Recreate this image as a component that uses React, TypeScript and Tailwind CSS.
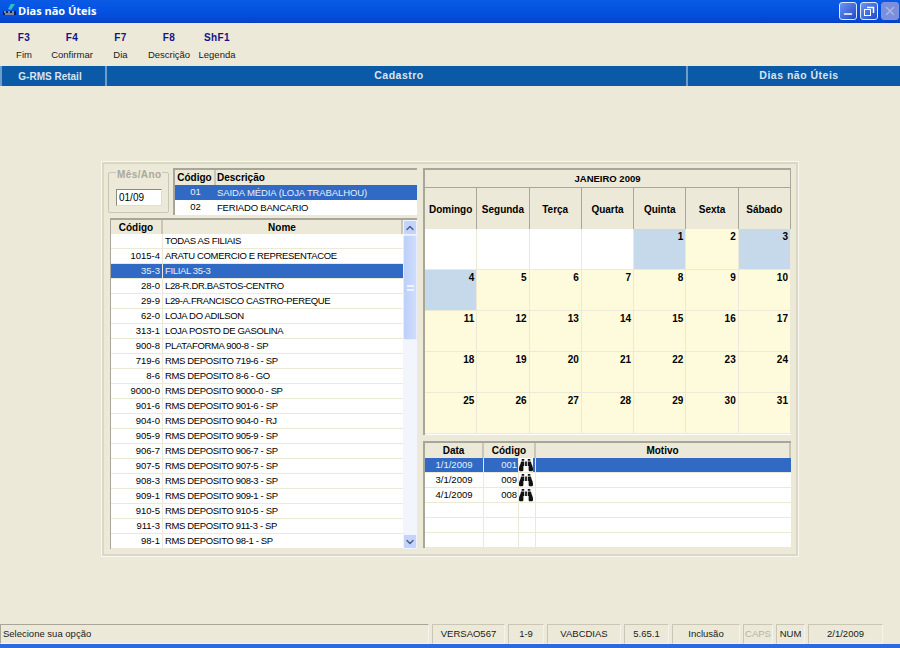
import { FaBinoculars } from "react-icons/fa"
import { Minus, ChevronUp, ChevronDown, X } from "lucide-react"

const shortcuts = [
  { key: "F3", label: "Fim", w: "w-[48px]" },
  { key: "F4", label: "Confirmar", w: "w-[48px]" },
  { key: "F7", label: "Dia", w: "w-[49px]" },
  { key: "F8", label: "Descrição", w: "w-[48px]" },
  { key: "ShF1", label: "Legenda", w: "w-[48px]" },
]

const filiais = [
  ["", "TODAS AS FILIAIS"],
  ["1015-4", "ARATU COMERCIO E REPRESENTACOE"],
  ["35-3", "FILIAL 35-3"],
  ["28-0", "L28-R.DR.BASTOS-CENTRO"],
  ["29-9", "L29-A.FRANCISCO CASTRO-PEREQUE"],
  ["62-0", "LOJA DO ADILSON"],
  ["313-1", "LOJA POSTO DE GASOLINA"],
  ["900-8", "PLATAFORMA 900-8 - SP"],
  ["719-6", "RMS DEPOSITO 719-6 - SP"],
  ["8-6", "RMS DEPOSITO 8-6 - GO"],
  ["9000-0", "RMS DEPOSITO 9000-0 - SP"],
  ["901-6", "RMS DEPOSITO 901-6 - SP"],
  ["904-0", "RMS DEPOSITO 904-0 - RJ"],
  ["905-9", "RMS DEPOSITO 905-9 - SP"],
  ["906-7", "RMS DEPOSITO 906-7 - SP"],
  ["907-5", "RMS DEPOSITO 907-5 - SP"],
  ["908-3", "RMS DEPOSITO 908-3 - SP"],
  ["909-1", "RMS DEPOSITO 909-1 - SP"],
  ["910-5", "RMS DEPOSITO 910-5 - SP"],
  ["911-3", "RMS DEPOSITO 911-3 - SP"],
  ["98-1", "RMS DEPOSITO 98-1 - SP"],
]

const weekdays = ["Domingo", "Segunda", "Terça", "Quarta", "Quinta", "Sexta", "Sábado"]

// null = empty cell; blue days are the ones flagged in the table below
const days: (number | null)[] = [null, null, null, null, ...Array.from({ length: 31 }, (_, i) => i + 1)]
const blueDays = [1, 3, 4]

const motivos = [
  ["1/1/2009", "001"],
  ["3/1/2009", "009"],
  ["4/1/2009", "008"],
  ["", ""],
  ["", ""],
  ["", ""],
]

const statusCells = [
  { text: "VERSAO567", w: "w-[73px]" },
  { text: "1-9", w: "w-[36px]" },
  { text: "VABCDIAS", w: "w-[74px]" },
  { text: "5.65.1", w: "w-[45px]" },
  { text: "Inclusão", w: "w-[68px]" },
  { text: "CAPS", w: "w-[30px]", muted: true },
  { text: "NUM", w: "w-[29px]" },
  { text: "2/1/2009", w: "w-[75px]" },
]

const headCell = "flex items-center justify-center bg-[#ece9d8] border-r-2 border-r-[#c9c6b5] text-[10px] font-bold text-black"

function WinButton({ children, disabled }: { children: React.ReactNode; disabled?: boolean }) {
  return (
    <div
      className={
        disabled
          ? "flex h-[18px] w-[18px] items-center justify-center rounded-[3px] border border-[#7f93e0] bg-[#7c8fdc] text-[#a9b5e6]"
          : "flex h-[18px] w-[18px] items-center justify-center rounded-[3px] border border-[#dfe8ff] bg-gradient-to-br from-[#6f94f0] to-[#2146c8] text-white"
      }
    >
      {children}
    </div>
  )
}

export default function App() {
  return (
    <div className="flex h-[648px] w-[900px] flex-col overflow-hidden bg-[#ece9d8] font-['Liberation_Sans',sans-serif] text-[9.5px] text-black">
      {/* Title bar */}
      <div className="flex h-[23px] shrink-0 items-center justify-between border-b border-b-[#0a3fc0] bg-gradient-to-b from-[#0a5ae6] via-[#0453e0] to-[#0246d2] pl-[2px] pr-[1px]">
        <div className="flex items-center gap-0">
          <svg width="16" height="16" viewBox="0 0 16 16">
            <path d="M9 1 L13 1 L9 7 L6 6 Z" fill="#27c4c8" />
            <rect x="1" y="8" width="13" height="4" fill="#10204a" />
            <path d="M2 9 H4 M6 9 H8 M10 9 H12 M3 11 H12" stroke="#e8f0ff" strokeWidth="1" />
          </svg>
          <span className="font-['Open_Sans',sans-serif] text-[11px] font-bold text-white">Dias não Úteis</span>
        </div>
        <div className="flex items-center gap-[3px]">
          <WinButton>
            <Minus size={12} strokeWidth={3} className="mt-[5px]" />
          </WinButton>
          <WinButton>
            <svg width="12" height="12" viewBox="0 0 12 12" fill="none" stroke="white">
              <rect x="1.5" y="4.5" width="6" height="6" />
              <path d="M4 2.5 H10.5 V8" strokeWidth="1.5" />
            </svg>
          </WinButton>
          <WinButton disabled>
            <X size={14} strokeWidth={2.5} />
          </WinButton>
        </div>
      </div>

      {/* Shortcut bar */}
      <div className="flex h-[43px] shrink-0 items-start pl-0 pt-[9px]">
        {shortcuts.map((s) => (
          <div key={s.key} className={`flex flex-col items-center ${s.w}`}>
            <span className="text-[10px] font-bold leading-[12px] tracking-[0.4px] text-[#14148a]">{s.key}</span>
            <span className="mt-[5px] whitespace-nowrap leading-[12px] text-[#202020]">{s.label}</span>
          </div>
        ))}
      </div>

      {/* Module band */}
      <div className="flex h-[20px] shrink-0 items-center bg-[#0a5aa8] text-[10.5px] font-bold tracking-[0.5px] text-[#dbe4ee]">
        <div className="flex h-full w-[107px] items-center justify-center border-x-2 border-x-[#6f9cc8] pr-[7px] text-[10px] tracking-normal">
          G-RMS Retail
        </div>
        <div className="flex h-full w-[581px] items-center justify-center border-r-2 border-r-[#6f9cc8] pl-[5px]">Cadastro</div>
        <div className="flex h-full flex-1 items-center justify-center pl-[10px]">Dias não Úteis</div>
      </div>

      {/* Work area */}
      <div className="flex flex-1 items-start pl-[102px] pt-[76px]">
        <div className="h-[394px] w-[696px] border-2 border-[#dad7c5] bg-[#ece9d8] px-[3px] pt-[4px] outline outline-1 outline-[#f8f7f0]">
          <div className="flex gap-[6px] pl-[1px]">
            {/* Left column */}
            <div className="flex w-[309px] flex-col">
              <div className="flex h-[48px] gap-[4px]">
                <fieldset className="relative mt-[4px] h-[41px] w-[61px] rounded-[2px] border border-[#c9c6b5] pl-[7px] pt-[16px]">
                  <legend className="absolute -top-[6px] left-[7px] bg-[#ece9d8] px-[1px] text-[10px] font-bold tracking-[0.4px] text-[#aaa89c]">
                    Mês/Ano
                  </legend>
                  <div className="flex h-[17px] w-[46px] items-center border border-[#8d8b7f] border-b-[#e0decf] border-r-[#e0decf] bg-white pl-[2px] text-[10px]">
                    01/09
                  </div>
                </fieldset>
                <div className="h-[47px] flex-1 border-l-2 border-t-2 border-[#a8a698] bg-white">
                  <div className="flex h-[15px] bg-[#ece9d8] font-bold">
                    <div className={`${headCell} w-[41px]`}>Código</div>
                    <div className="flex flex-1 items-center bg-[#ece9d8] pl-[1px] text-[10px] font-bold">Descrição</div>
                  </div>
                  <div className="flex h-[15px] bg-[#316ac5] text-[#e8eef8]">
                    <div className="flex w-[41px] items-center justify-center">01</div>
                    <div className="flex-1 whitespace-nowrap pl-[1px] leading-[15px] tracking-[-0.1px]">SAIDA MÉDIA (LOJA TRABALHOU)</div>
                  </div>
                  <div className="flex h-[15px]">
                    <div className="flex w-[41px] items-center justify-center">02</div>
                    <div className="flex-1 whitespace-nowrap pl-[1px] leading-[15px] tracking-[-0.2px]">FERIADO BANCARIO</div>
                  </div>
                </div>
              </div>

              {/* Store list */}
              <div className="ml-[2px] mt-[2px] flex h-[331px] w-[307px] border-l border-t-2 border-[#a8a698] bg-white">
                <div className="flex-1 overflow-hidden">
                  <div className="flex h-[14px]">
                    <div className={`${headCell} w-[52px]`}>Código</div>
                    <div className={`${headCell} flex-1 border-r-0`}>Nome</div>
                  </div>
                  {filiais.map(([code, name]) => {
                    const selected = code === "35-3"
                    return (
                      <div
                        key={name}
                        className={`flex h-[15px] border-b border-b-[#ece9d8] leading-[14px] ${selected ? "bg-[#316ac5] text-[#e8eef8]" : ""}`}
                      >
                        <div className="w-[52px] border-r border-r-[#ece9d8] pr-[2px] text-right">{code}</div>
                        <div className="flex-1 whitespace-nowrap pl-[2px] tracking-[-0.35px]">{name}</div>
                      </div>
                    )
                  })}
                </div>
                <div className="flex w-[14px] flex-col bg-[#f3f5fc]">
                  <div className="flex h-[15px] items-center justify-center rounded-[2px] border border-[#f0f3ff] bg-[#c3d3fb] text-[#4d6185]">
                    <ChevronUp size={12} strokeWidth={3} />
                  </div>
                  <div className="flex h-[105px] items-center justify-center rounded-[2px] border border-[#e6ecff] bg-gradient-to-r from-[#bcd0fb] to-[#cfdcfd]">
                    <div className="h-[6px] w-[7px] border-y-2 border-[#eef3ff]" />
                  </div>
                  <div className="flex-1" />
                  <div className="flex h-[15px] items-center justify-center rounded-[2px] border border-[#f0f3ff] bg-[#c3d3fb] text-[#4d6185]">
                    <ChevronDown size={12} strokeWidth={3} />
                  </div>
                </div>
              </div>
            </div>

            {/* Right column */}
            <div className="flex w-[368px] flex-col">
              <div className="h-[267px] border-l-2 border-t-2 border-[#a8a698] bg-white">
                <div className="flex h-[18px] items-center justify-center border-b border-b-[#a8a698] border-r border-r-[#a8a698] bg-[#ece9d8] pt-[1px] text-[9.5px] font-bold">
                  JANEIRO 2009
                </div>
                <div className="grid h-[41px] grid-cols-7">
                  {weekdays.map((d) => (
                    <div key={d} className="flex items-center justify-center border-r border-r-[#a8a698] bg-[#ece9d8] pt-[1px] text-[10px] font-bold">
                      {d}
                    </div>
                  ))}
                </div>
                <div className="grid grid-cols-7 grid-rows-[repeat(5,41px)]">
                  {days.map((day, i) => (
                    <div
                      key={i}
                      className={`border-b border-r border-[#ece9d8] pr-[2px] pt-[2px] text-right text-[10px] font-bold leading-[12px] ${
                        day === null ? "bg-white" : blueDays.includes(day) ? "bg-[#c6d9ea]" : "bg-[#fdfbdc]"
                      }`}
                    >
                      {day}
                    </div>
                  ))}
                </div>
              </div>

              {/* Reason table */}
              <div className="mt-[6px] h-[107px] border-l-2 border-t-2 border-[#a8a698] bg-white">
                <div className="flex h-[15px] bg-[#ece9d8]">
                  <div className={`${headCell} w-[59px]`}>Data</div>
                  <div className={`${headCell} w-[52px]`}>Código</div>
                  <div className={`${headCell} flex-1 border-r-0`}>Motivo</div>
                </div>
                {motivos.map(([date, code], i) => (
                  <div
                    key={i}
                    className={`flex h-[15px] border-b border-b-[#ece9d8] leading-[14px] ${i === 0 ? "bg-[#316ac5] text-[#e8eef8]" : ""}`}
                  >
                    <div className="w-[59px] border-r border-r-[#ece9d8] text-center">{date}</div>
                    <div className="w-[35px] border-r border-r-[#ece9d8] pr-[1px] text-right">{code}</div>
                    <div className="flex w-[17px] border-r border-r-[#ece9d8]">
                      <div className="flex h-[14px] w-[14px] items-center bg-white">
                        {code && <FaBinoculars size={14} className="text-[#111]" />}
                      </div>
                    </div>
                    <div className="flex-1" />
                  </div>
                ))}
              </div>
            </div>
          </div>
        </div>
      </div>

      {/* Status bar */}
      <div className="flex h-[20px] shrink-0 items-stretch gap-[3px] pr-[17px] leading-[18px] text-[#202020]">
        <div className="w-[429px] border border-[#a8a698] border-b-[#f5f4ec] border-r-[#f5f4ec] pl-[2px]">Selecione sua opção</div>
        {statusCells.map((c) => (
          <div
            key={c.text}
            className={`${c.w} border border-[#c9c6b5] border-b-[#f5f4ec] border-r-[#f5f4ec] text-center ${c.muted ? "text-[#b5b3a6]" : ""}`}
          >
            {c.text}
          </div>
        ))}
      </div>
      <div className="h-[4px] shrink-0 bg-[#2a6ae0]" />
    </div>
  )
}
